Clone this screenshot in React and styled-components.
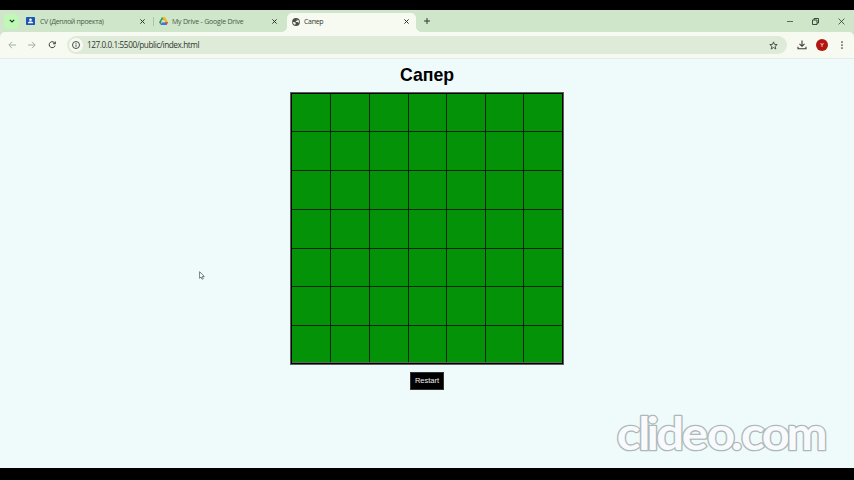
import React from "react";
import styled, { createGlobalStyle } from "styled-components";

const GlobalStyle = createGlobalStyle`
  * { box-sizing: border-box; }
  body { margin: 0; background: #000; overflow: hidden; }
  svg { display: block; flex: none; }
`;

const Screen = styled.div`
  width: 854px;
  height: 480px;
  padding: 10px 0 12px;
  background: #000;
  display: flex;
  flex-direction: column;
  font-family: "Open Sans", "Noto Sans", sans-serif;
`;

const TabStrip = styled.div`
  height: 22px;
  flex: none;
  display: flex;
  align-items: center;
  padding-left: 4px;
  background: #cfe6ca;
`;

const TabSearch = styled.div`
  width: 15px;
  height: 15px;
  border-radius: 5px;
  background: #bff9b5;
  display: grid;
  place-items: center;
`;

const Tab = styled.div`
  width: ${(p) => p.$width}px;
  height: ${(p) => (p.$active ? 19 : 22)}px;
  align-self: flex-end;
  position: relative;
  display: flex;
  align-items: center;
  padding: 0 ${(p) => p.$right}px ${(p) => (p.$active ? 2 : 0)}px ${(p) => p.$left}px;
  border-radius: 5px 5px 0 0;
  background: ${(p) => (p.$active ? "#f7faf0" : "transparent")};
  color: ${(p) => (p.$active ? "#2f352d" : "#4a5a47")};
  &::before, &::after {
    content: "";
    display: ${(p) => (p.$active ? "block" : "none")};
    position: absolute;
    bottom: 0;
    width: 5px;
    height: 5px;
  }
  &::before { left: -5px; background: radial-gradient(circle at 0 0, transparent 4.6px, #f7faf0 5px); }
  &::after { right: -5px; background: radial-gradient(circle at 100% 0, transparent 4.6px, #f7faf0 5px); }
`;

const TabTitle = styled.span`
  flex: 1;
  margin-left: ${(p) => p.$gap}px;
  padding-top: 1px;
  font-size: 7px;
  line-height: 10px;
  letter-spacing: ${(p) => p.$spacing || 0}px;
  white-space: nowrap;
`;

const TabDivider = styled.div`
  width: 1px;
  height: 9px;
  background: #a9c4a5;
`;

const NewTab = styled.div`
  margin-left: 8px;
`;

const WindowControls = styled.div`
  margin-left: auto;
  padding-right: 9px;
  display: flex;
  align-items: center;
  gap: 19px;
`;

const ToolbarBack = styled.div`
  flex: none;
  background: #cfe6ca;
`;

const Toolbar = styled.div`
  height: 26px;
  display: flex;
  align-items: center;
  background: #f7faf0;
  border-radius: 5px 5px 0 0;
  padding: 0 8px 0 7px;
`;

const NavButtons = styled.div`
  display: flex;
  gap: 10px;
`;

const AddressBar = styled.div`
  width: 720px;
  height: 18px;
  margin-left: 10px;
  padding: 0 9px 0 2px;
  border-radius: 9px;
  background: #deebd8;
  display: flex;
  align-items: center;
`;

const SiteInfo = styled.div`
  width: 14px;
  height: 14px;
  border-radius: 50%;
  background: #f7faf0;
  display: grid;
  place-items: center;
`;

const Url = styled.span`
  flex: 1;
  margin-left: 4px;
  color: #30362e;
  font-size: 8.2px;
  line-height: 12px;
  letter-spacing: -0.41px;
`;

const ToolbarActions = styled.div`
  flex: 1;
  margin-left: 10px;
  display: flex;
  align-items: center;
  justify-content: space-between;
`;

const Avatar = styled.div`
  width: 12px;
  height: 12px;
  margin-right: 1px;
  border-radius: 50%;
  background: #b3160e;
  color: #f6d3ce;
  display: grid;
  place-items: center;
  font-size: 6px;
  font-weight: 600;
  line-height: 12px;
`;

const Page = styled.main`
  flex: 1;
  position: relative;
  display: flex;
  flex-direction: column;
  align-items: center;
  background: #effbfa;
  border-top: 1px solid #e4eee6;
  font-family: "Liberation Sans", Arial, sans-serif;
`;

const Title = styled.h1`
  margin: 6px 0 0;
  height: 27px;
  font-size: 17.7px;
  line-height: 21px;
  font-weight: 700;
  color: #000;
`;

const Board = styled.div`
  width: 274px;
  height: 273px;
  padding: 2px;
  background: #062606;
  box-shadow: inset 0 0 0 1px #59605d, inset 0 0 0 2px #000, inset 0 -3px 0 #5c6a5c;
  display: grid;
  grid-template-columns: 38px 38px 38px 37px 38px 37px 38px;
  grid-template-rows: 37px 38px 38px 38px 37px 38px 36px;
  gap: 1px;
`;

const Cell = styled.div`
  background: #049208;
`;

const Restart = styled.button`
  width: 34px;
  height: 18px;
  margin: 7px 0 0;
  padding: 0 0 1px;
  border: 1px solid #333;
  background: #000;
  color: #f0f0f0;
  font: 7.5px/14px "Liberation Sans", Arial, sans-serif;
`;

const Cursor = styled.svg`
  position: absolute;
  left: 199px;
  top: 212px;
`;

const Watermark = styled.svg`
  position: absolute;
  left: 610px;
  top: 343px;
  text {
    font-family: Lato, sans-serif;
    font-weight: 700;
    font-size: 45px;
    fill: #f8fafd;
    stroke: #adb9b8;
    stroke-width: 2.6px;
    stroke-linejoin: round;
    paint-order: stroke;
  }
`;

const Close = ({ size = 5, color = "#2d332b" }) => (
  <svg width={size} height={size} viewBox="0 0 5 5" stroke={color} strokeWidth="1">
    <path d="M.4.4l4.2 4.2M4.6.4L.4 4.6" />
  </svg>
);

const ContactIcon = () => (
  <svg width="9" height="8" viewBox="0 0 9 8">
    <rect width="9" height="8" rx=".8" fill="#1b57b5" />
    <circle cx="4.5" cy="2.7" r="1.3" fill="#fff" />
    <path d="M2 6.3V5.8c0-1.8 5-1.8 5 0v.5z" fill="#fff" />
  </svg>
);

const DriveIcon = () => (
  <svg width="9" height="8" viewBox="0 0 9 8">
    <path d="M3 0h1.6L6 2.7 4.5 3.3 3 2.6 1.6 7.7 0 5.3z" fill="#2f9e51" />
    <path d="M3 0h3l3 5.3H6z" fill="#f2b92c" />
    <path d="M3 5.3h6L7.5 8h-6z" fill="#3f75dd" />
    <path d="M6.2 5.3H9L7.5 8z" fill="#dc4a35" />
    <path d="M4.5 2.8l1.4 2.5H3.1z" fill="#d7ead2" />
  </svg>
);

const GlobeIcon = () => (
  <svg width="8" height="8" viewBox="0 0 8 8">
    <circle cx="4" cy="4" r="3.9" fill="#4a514b" />
    <path d="M.9 4.1l2.2.1.9 1-.7.8v1.1C1.8 6.7.9 5.6.9 4.1zM4 1l1.7.5-.4 1-1.3.4-.3 1 2 .2 1 .9.4-1.3C6.8 1.8 5.5.9 4 1z" fill="#edf1e7" />
  </svg>
);

const Arrow = ({ back }) => (
  <svg width="10" height="10" viewBox="0 0 10 10" fill="none" stroke="#a5aea1" strokeWidth="1">
    <path d={back ? "M9 5H2M5 1.8L1.8 5 5 8.2" : "M1 5h7M5 1.8L8.2 5 5 8.2"} />
  </svg>
);

const Reload = () => (
  <svg width="10" height="10" viewBox="0 0 10 10" fill="none" stroke="#343b33" strokeWidth="1">
    <path d="M8 3.600A3 3 0 1 0 8.100 5.500M8.300 1.500v2.300H6" />
  </svg>
);

const InfoIcon = () => (
  <svg width="8" height="8" viewBox="0 0 8 8" fill="none" stroke="#343b33">
    <circle cx="4" cy="4" r="3.5" strokeWidth=".9" />
    <path d="M4 3.6v2.2M4 2v.9" strokeWidth=".9" />
  </svg>
);

const Star = () => (
  <svg width="9" height="9" viewBox="0 0 9 9" fill="none" stroke="#3d463b" strokeWidth=".9">
    <path d="M4.5.9l1 2.5 2.7.2-2.1 1.7.7 2.7-2.3-1.5L2.200 8l.7-2.7L.8 3.600l2.700-.2z" />
  </svg>
);

const Download = () => (
  <svg width="10" height="10" viewBox="0 0 10 10" fill="none" stroke="#343b33" strokeWidth="1.1">
    <path d="M5 .6v5.600M2.500 3.800L5 6.300l2.500-2.500M1 6.800v2h8v-2" />
  </svg>
);

export default function App() {
  return (
    <>
      <GlobalStyle />
      <Screen>
        <TabStrip>
          <TabSearch>
            <svg width="6" height="4" viewBox="0 0 6 4" fill="none" stroke="#17301a" strokeWidth="1.2">
              <path d="M.8.8L3 3 5.200.8" />
            </svg>
          </TabSearch>
          <Tab $width={134} $left={7} $right={8}>
            <ContactIcon />
            <TabTitle $gap={5} $spacing={-0.32}>CV (Деплой проекта)</TabTitle>
            <Close />
          </Tab>
          <TabDivider />
          <Tab $width={133} $left={5} $right={10}>
            <DriveIcon />
            <TabTitle $gap={4} $spacing={-0.22}>My Drive - Google Drive</TabTitle>
            <Close />
          </Tab>
          <Tab $active $width={129} $left={5} $right={7}>
            <GlobeIcon />
            <TabTitle $gap={4} $spacing={-0.3}>Сапер</TabTitle>
            <Close />
          </Tab>
          <NewTab>
            <svg width="6" height="6" viewBox="0 0 6 6" stroke="#2d3c2b" strokeWidth="1">
              <path d="M0 3h6M3 0v6" />
            </svg>
          </NewTab>
          <WindowControls>
            <svg width="6" height="6" viewBox="0 0 6 6" stroke="#3c483a">
              <path d="M0 3.500h6" strokeWidth=".8" />
            </svg>
            <svg width="7" height="7" viewBox="0 0 7 7" fill="none" stroke="#2f3a2d" strokeWidth=".9">
              <path d="M.5 2h4.500v4.500H.5zM2 1.900V.5h4.500V5H5" />
            </svg>
            <svg width="7" height="7" viewBox="0 0 7 7" stroke="#2f3a2d" strokeWidth=".8">
              <path d="M.6.6l5.800 5.800M6.400.6L.6 6.400" />
            </svg>
          </WindowControls>
        </TabStrip>
        <ToolbarBack>
          <Toolbar>
            <NavButtons>
              <Arrow back />
              <Arrow />
              <Reload />
            </NavButtons>
            <AddressBar>
              <SiteInfo><InfoIcon /></SiteInfo>
              <Url>127.0.0.1:5500/public/index.html</Url>
              <Star />
            </AddressBar>
            <ToolbarActions>
              <Download />
              <Avatar>Y</Avatar>
              <svg width="8" height="8" viewBox="0 0 8 8" fill="#343b33">
                <circle cx="4" cy="1" r=".85" />
                <circle cx="4" cy="4" r=".85" />
                <circle cx="4" cy="7" r=".85" />
              </svg>
            </ToolbarActions>
          </Toolbar>
        </ToolbarBack>
        <Page>
          <Title>Сапер</Title>
          <Board>
            {Array.from({ length: 49 }, (_, i) => <Cell key={i} />)}
          </Board>
          <Restart>Restart</Restart>
          <Cursor width="6" height="9" viewBox="0 0 6 9">
            <path d="M.6.7v6.600l1.500-1.300 1 2.200 1.200-.5-1-2.200h2z" fill="#fff" stroke="#555e60" strokeWidth=".8" />
          </Cursor>
          <Watermark width="236" height="66" viewBox="0 0 236 66">
            <text
              transform="scale(1.09 1)"
              x="6.200 25.900 33.500 42.400 65.900 88.900 111.100 120.200 139.300 161.900"
              y="48"
            >
              clideo.com
            </text>
          </Watermark>
        </Page>
      </Screen>
    </>
  );
}
